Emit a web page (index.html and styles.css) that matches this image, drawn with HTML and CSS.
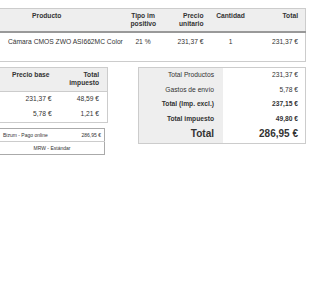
FILE: index.html
```html
<!DOCTYPE html>
<html>
<head>
<meta charset="utf-8">
<link rel="stylesheet" href="styles.css">
</head>
<body>
<table class="products">
  <colgroup>
    <col class="w-prod">
    <col class="w-tax">
    <col class="w-price">
    <col class="w-qty">
    <col class="w-total">
  </colgroup>
  <thead>
    <tr>
      <th class="h-prod">Producto</th>
      <th class="c-tax">Tipo im<br>positivo</th>
      <th class="c-price">Precio<br>unitario</th>
      <th class="c-qty">Cantidad</th>
      <th class="c-total">Total</th>
    </tr>
  </thead>
  <tbody>
    <tr>
      <td class="d-prod">Cámara CMOS ZWO ASI662MC Color</td>
      <td class="c-tax">21 %</td>
      <td class="c-price">231,37 €</td>
      <td class="c-qty">1</td>
      <td class="c-total">231,37 €</td>
    </tr>
  </tbody>
</table>

<div class="summary">
  <div class="left">
    <table class="taxes">
      <thead>
        <tr>
          <th class="t-base">Precio base</th>
          <th class="t-tax">Total<br>impuesto</th>
        </tr>
      </thead>
      <tbody>
        <tr><td>231,37 €</td><td>48,59 €</td></tr>
        <tr><td>5,78 €</td><td>1,21 €</td></tr>
      </tbody>
    </table>
    <table class="payment">
      <tr><td class="p-name">Bizum - Pago online</td><td class="p-amount">286,95 €</td></tr>
      <tr><td colspan="2" class="p-carrier">MRW - Estándar</td></tr>
    </table>
  </div>
  <table class="totals">
    <tr><th>Total Productos</th><td>231,37 €</td></tr>
    <tr><th>Gastos de envío</th><td>5,78 €</td></tr>
    <tr class="bold"><th>Total (Imp. excl.)</th><td>237,15 €</td></tr>
    <tr class="bold"><th>Total impuesto</th><td>49,80 €</td></tr>
    <tr class="grand"><th>Total</th><td>286,95 €</td></tr>
  </table>
</div>
</body>
</html>
```
FILE: styles.css
```css
html, body {
  background: #ffffff;
}
body {
  margin: 8px 0 0 0;
  font-family: "Liberation Sans", Arial, sans-serif;
  font-size: 6.7px;
  color: #333333;
}
table {
  border-collapse: collapse;
}
.products {
  width: 307px;
  table-layout: fixed;
  margin-left: -1px;
  border: 1px solid #cccccc;
}
.w-prod { width: 127px; }
.w-tax { width: 33px; }
.w-price { width: 48px; }
.w-qty { width: 46px; }
.products th {
  background: #eeeeee;
  font-weight: bold;
  line-height: 8px;
  padding: 3px 4px 3px;
  vertical-align: top;
  white-space: nowrap;
  border-bottom: 2px solid #999999;
}
.products td {
  padding: 5px 4px 15px;
  line-height: 8px;
  vertical-align: top;
  white-space: nowrap;
}
.products .h-prod { text-align: center; padding-right: 37px; }
.products .d-prod { text-align: left; padding-left: 8px; }
.c-tax { text-align: center; }
.c-price { text-align: right; }
.c-qty { text-align: center; }
.c-total { text-align: right; }
.products .c-total { padding-right: 7px; }

.summary {
  display: flex;
  margin-top: 5px;
  gap: 30px;
}
.left {
  width: 108px;
  display: flex;
  flex-direction: column;
  gap: 5px;
}
.taxes {
  width: 109px;
  margin-left: -1px;
  border: 1px solid #cccccc;
}
.taxes th {
  background: #eeeeee;
  font-weight: bold;
  line-height: 8px;
  padding: 3px 8px 4px;
  vertical-align: top;
  border-bottom: 1px solid #cccccc;
}
.taxes .t-base { text-align: left; padding-left: 12px; }
.taxes .t-tax { text-align: right; }
.taxes td {
  text-align: right;
  padding: 3px 8px 4px;
  line-height: 8px;
}
.payment {
  width: 106px;
  margin-left: -1px;
  border: 1px solid #aaaaaa;
  font-size: 5px;
}
.payment td {
  padding: 3px 3px;
  line-height: 6px;
}
.p-name { text-align: left; }
.p-amount { text-align: right; }
.p-carrier { text-align: center; border-top: 1px solid #cccccc; }

.totals {
  width: 168px;
  border: 1px solid #cccccc;
  align-self: flex-start;
}
.totals th {
  background: #eeeeee;
  font-weight: normal;
  text-align: right;
  width: 67px;
  padding: 3px 9px 3px 8px;
  line-height: 8.5px;
}
.totals td {
  text-align: right;
  padding: 3px 7px 3px 6px;
  line-height: 8.5px;
}
.totals .bold th, .totals .bold td { font-weight: bold; }
.totals .grand th, .totals .grand td {
  font-weight: bold;
  font-size: 10px;
  line-height: 12px;
  padding-top: 2px;
  padding-bottom: 3px;
}
```
